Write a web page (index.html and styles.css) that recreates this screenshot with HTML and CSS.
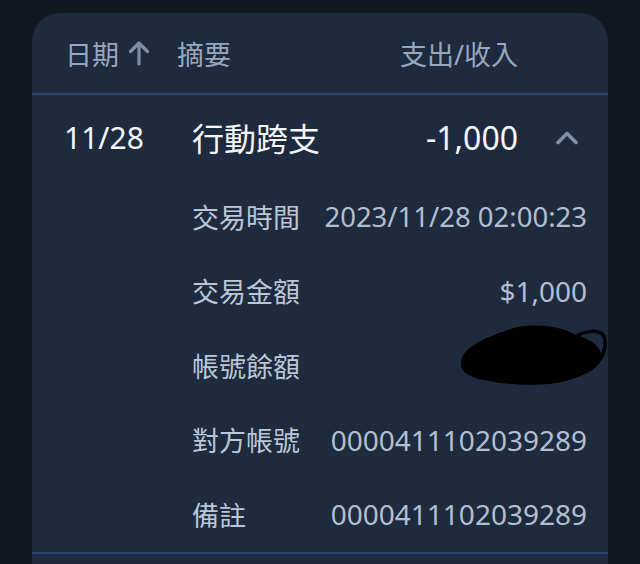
FILE: index.html
```html
<!DOCTYPE html>
<html lang="zh-Hant">
<head>
    <meta charset="UTF-8">
    <meta name="viewport" content="width=device-width, initial-scale=1.0">
    <title>交易明細</title>
    <link rel="stylesheet" href="styles.css">
</head>
<body>
    <div class="card">
        <div class="table-head">
            <div class="head-date">
                <span>日期</span>
                <svg class="sort-arrow" width="22" height="26" viewBox="0 0 22 26">
                    <path d="M11 24 V3 M2.5 11.5 L11 3 L19.5 11.5" fill="none" stroke="#7c8ea8" stroke-width="3.2" stroke-linecap="round" stroke-linejoin="round"/>
                </svg>
            </div>
            <div class="head-summary">摘要</div>
            <div class="head-amount">支出/收入</div>
        </div>

        <div class="txn-row">
            <div class="txn-date">11/28</div>
            <div class="txn-title">行動跨支</div>
            <div class="txn-amount">-1,000</div>
            <svg class="toggle" width="24" height="15" viewBox="0 0 24 15">
                <path d="M3 12.5 L12 3.5 L21 12.5" fill="none" stroke="#7f91ab" stroke-width="3.6" stroke-linecap="round" stroke-linejoin="round"/>
            </svg>
        </div>

        <div class="details">
            <div class="detail-row">
                <span class="label">交易時間</span>
                <span class="value value-time">2023/11/28 02:00:23</span>
            </div>
            <div class="detail-row">
                <span class="label">交易金額</span>
                <span class="value">$1,000</span>
            </div>
            <div class="detail-row">
                <span class="label">帳號餘額</span>
                <svg class="redacted" width="148" height="62" viewBox="0 0 148 62">
                    <path d="M2 38 C4 22 30 12 55 4 C75 -1 100 2 115 10 C128 14 140 20 142 30 C144 42 130 50 110 56 C90 62 60 62 35 58 C15 55 0 50 2 38 Z" fill="#000"/>
                    <path d="M112 16 C125 5 145 4 146 16 C147 30 140 42 126 44" fill="none" stroke="#000" stroke-width="3.5" stroke-linecap="round"/>
                </svg>
            </div>
            <div class="detail-row">
                <span class="label">對方帳號</span>
                <span class="value">0000411102039289</span>
            </div>
            <div class="detail-row">
                <span class="label">備註</span>
                <span class="value">0000411102039289</span>
            </div>
        </div>

        <div class="next-row"></div>
    </div>
</body>
</html>
```

FILE: styles.css
```css
body {
    margin: 0;
    height: 564px;
    overflow: hidden;
    background-color: #121822;
    font-family: "Noto Sans", "Noto Sans CJK TC", sans-serif;
    padding: 13px 32px 0;
}
.card {
    background-color: #1e2a3d;
    border-radius: 28px 28px 0 0;
}
.table-head {
    display: flex;
    align-items: center;
    height: 80px;
    padding: 0 90px 0 33px;
    color: #97a7be;
    font-size: 27px;
    border-bottom: 2px solid #31456a;
}
.head-date {
    width: 112px;
    display: flex;
    align-items: center;
    gap: 9px;
}
.head-summary {
    flex: 1;
}
.txn-row {
    display: flex;
    align-items: center;
    height: 84px;
    padding: 0 29px 0 32px;
    color: #f4f6fa;
}
.txn-date {
    width: 128px;
    font-size: 30px;
}
.txn-title {
    flex: 1;
    font-size: 32px;
}
.txn-amount {
    font-size: 32px;
}
.toggle {
    margin-left: 37px;
}
.details {
    padding: 0 21px 0 160px;
}
.detail-row {
    display: flex;
    align-items: center;
    justify-content: space-between;
    height: 74.5px;
}
.label {
    font-size: 27px;
    color: #bac7d8;
}
.value {
    font-size: 28px;
    color: #b1bfd3;
}
.value-time {
    font-size: 27.5px;
}
.redacted {
    margin-right: -20px;
    transform: translateY(-10px);
}
.next-row {
    height: 60px;
    border-top: 2px solid #31456a;
}
```
